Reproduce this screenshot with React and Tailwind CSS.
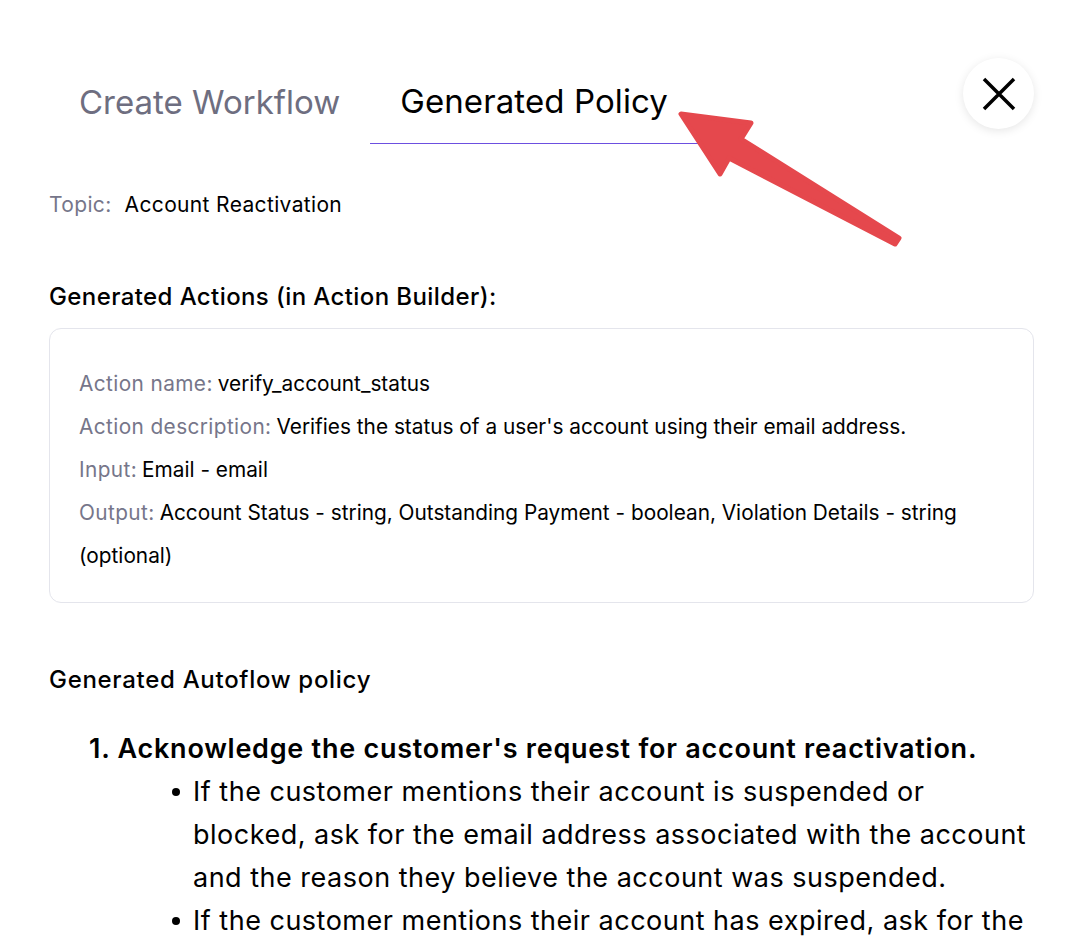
import React from 'react';

const font = { fontFamily: 'Inter, "Noto Sans", sans-serif' };

const Arrow = () => (
    <svg className="absolute left-0 top-0 pointer-events-none" width="1085" height="300" viewBox="0 0 1085 300">
        <polygon
            points="681,114 751,123 741,139 899,238 895,244 729,158 720,174"
            fill="#e5484d"
            stroke="#e5484d"
            strokeWidth="5"
            strokeLinejoin="round"
        />
    </svg>
);

const Field = ({ label, children }) => (
    <div className="leading-[43px]">
        <span className="text-[#76768a] tracking-[0.4px] mr-[5px]">{label}</span>
        <span className="text-black">{children}</span>
    </div>
);

const Bullet = ({ children }) => (
    <li className="flex">
        <span className="w-[21px] shrink-0 flex pt-[18px]">
            <span className="w-[8px] h-[8px] rounded-full bg-black" />
        </span>
        <span>{children}</span>
    </li>
);

export default function App() {
    return (
        <div className="relative min-h-[936px] bg-white overflow-hidden" style={font}>
            <div className="pl-[49px] pr-[51px]">
                <div className="flex items-end pt-[80px]">
                    <div className="px-[30px] pb-[21px] text-[33px] leading-[42px] text-[#6e6e80]">
                        Create Workflow
                    </div>
                    <div className="px-[30px] pb-[21px] text-[33px] leading-[42px] text-black border-b border-[#6c4fe0] tracking-[0.1px]">
                        Generated Policy
                    </div>
                </div>

                <div className="flex gap-[13px] mt-[47px] text-[21px] leading-[28px] tracking-[0.35px]">
                    <span className="text-[#76768a]">Topic:</span>
                    <span className="text-black">Account Reactivation</span>
                </div>

                <h2 className="mt-[63px] text-[24px] leading-[30px] font-medium text-black tracking-[0.4px]">
                    Generated Actions (in Action Builder):
                </h2>

                <div className="mt-[16px] border border-[#e4e5ec] rounded-[12px] pl-[29px] pr-[20px] pt-[33px] pb-[25px] text-[20.8px]">
                    <Field label="Action name:">verify_account_status</Field>
                    <Field label="Action description:">Verifies the status of a user's account using their email address.</Field>
                    <Field label="Input:">Email - email</Field>
                    <Field label="Output:">
                        Account Status - string, Outstanding Payment - boolean, Violation Details - string (optional)
                    </Field>
                </div>

                <h2 className="mt-[62px] text-[24px] leading-[30px] font-medium text-black tracking-[0.7px]">
                    Generated Autoflow policy
                </h2>

                <ol className="mt-[32px] pl-[40px] mr-[-6px] text-[27px] leading-[43px] text-black">
                    <li>
                        <div className="font-semibold tracking-[0.75px]">1. Acknowledge the customer's request for account reactivation.</div>
                        <ul className="pl-[83px] tracking-[0.5px]">
                            <Bullet>
                                If the customer mentions their account is suspended or blocked, ask for the email address associated with the account and the reason they believe the account was suspended.
                            </Bullet>
                            <Bullet>
                                If the customer mentions their account has expired, ask for the email address associated with the account.
                            </Bullet>
                        </ul>
                    </li>
                </ol>
            </div>

            <button className="absolute left-[963px] top-[58px] w-[71px] h-[71px] rounded-full bg-white shadow-[0_2px_10px_rgba(0,0,0,0.1)] flex items-center justify-center">
                <svg width="34" height="34" viewBox="0 0 34 34">
                    <path d="M2 2 L32 32 M32 2 L2 32" stroke="black" strokeWidth="3.5" />
                </svg>
            </button>

            <Arrow />
        </div>
    );
}
